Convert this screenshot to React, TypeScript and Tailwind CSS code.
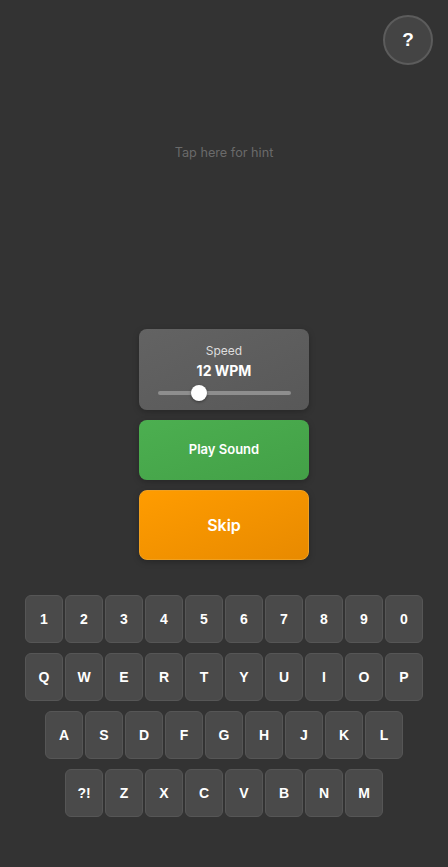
import React from "react";

const rows: string[][] = [
  ["1", "2", "3", "4", "5", "6", "7", "8", "9", "0"],
  ["Q", "W", "E", "R", "T", "Y", "U", "I", "O", "P"],
  ["A", "S", "D", "F", "G", "H", "J", "K", "L"],
  ["?!", "Z", "X", "C", "V", "B", "N", "M"],
];

export default function App() {
  return (
    <div
      className="relative w-full min-h-[867px] bg-[#333333] flex flex-col items-center"
      style={{ fontFamily: "Inter, 'Liberation Sans', sans-serif" }}
    >
      <button className="absolute top-[15px] right-[15px] w-[50px] h-[50px] rounded-full bg-[#444444] border-2 border-[#5c5c5c] flex items-center justify-center text-white text-[19px] font-bold [font-family:'Liberation_Sans',sans-serif]">
        ?
      </button>

      <div className="w-full h-[304px] flex items-center justify-center pt-[2px]">
        <span className="text-[12.7px] text-[#6a6a6a]">Tap here for hint</span>
      </div>

      <div className="mt-[25px] flex flex-col items-center gap-[10px] w-[170px]">
        <div className="w-full h-[81px] rounded-[8px] bg-gradient-to-br from-[#636363] to-[#585858] flex flex-col items-center pt-[14px] shadow-[0_2px_6px_rgba(0,0,0,0.25)]">
          <span className="text-[12px] leading-[15px] text-[#dddddd]">Speed</span>
          <span className="mt-[4px] text-[14px] leading-[17px] font-bold text-white">12 WPM</span>
          <div className="relative mt-[12px] w-[133px] h-[4px] rounded-full bg-[#8e8e8e]">
            <div className="absolute left-[33px] top-[-6px] w-[16px] h-[16px] rounded-full bg-white shadow-[0_1px_3px_rgba(0,0,0,0.4)]" />
          </div>
        </div>
        <button className="w-full h-[60px] rounded-[8px] bg-gradient-to-br from-[#4caf50] to-[#43a047] text-white text-[13px] font-semibold shadow-[0_2px_6px_rgba(0,0,0,0.25)]">
          Play Sound
        </button>
        <button className="w-full h-[70px] rounded-[8px] border border-[#f0a020] bg-gradient-to-br from-[#ff9c00] to-[#e88a00] text-white text-[16px] font-semibold shadow-[0_2px_6px_rgba(0,0,0,0.25)]">
          Skip
        </button>
      </div>

      <div className="mt-[35px] flex flex-col items-center gap-[10px]">
        {rows.map((row, i) => (
          <div key={i} className="flex gap-[2px]">
            {row.map((k) => (
              <div
                key={k}
                className="w-[38px] h-[48px] rounded-[6px] bg-[#4a4a4a] border border-[#565656] flex items-center justify-center text-white text-[14px] font-bold [font-family:'Liberation_Sans',Arial,sans-serif]"
              >
                {k}
              </div>
            ))}
          </div>
        ))}
      </div>
    </div>
  );
}
